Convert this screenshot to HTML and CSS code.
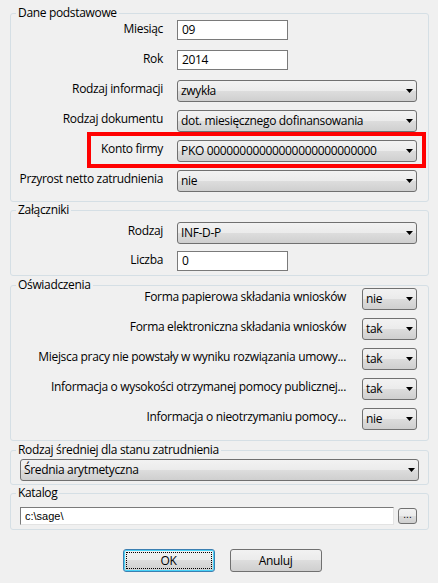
FILE: index.html
```html
<!DOCTYPE html>
<html lang="pl">
<head>
<meta charset="utf-8">
<title>Dialog</title>
<link rel="stylesheet" href="styles.css">
</head>
<body>
<div class="dialog">
  <fieldset class="group g1">
    <legend>Dane podstawowe</legend>
    <div class="row"><span class="lbl">Miesiąc</span><div class="edit">09</div></div>
    <div class="row"><span class="lbl">Rok</span><div class="edit">2014</div></div>
    <div class="row"><span class="lbl">Rodzaj informacji</span><div class="combo"><span>zwykła</span><svg class="arrow" viewBox="0 0 7 4"><polygon points="0,0 7,0 3.5,4"/></svg></div></div>
    <div class="row"><span class="lbl">Rodzaj dokumentu</span><div class="combo"><span>dot. miesięcznego dofinansowania</span><svg class="arrow" viewBox="0 0 7 4"><polygon points="0,0 7,0 3.5,4"/></svg></div></div>
    <div class="row"><span class="lbl">Konto firmy</span><div class="combo"><span>PKO 00000000000000000000000000</span><svg class="arrow" viewBox="0 0 7 4"><polygon points="0,0 7,0 3.5,4"/></svg></div><span class="redbox"></span></div>
    <div class="row"><span class="lbl">Przyrost netto zatrudnienia</span><div class="combo"><span>nie</span><svg class="arrow" viewBox="0 0 7 4"><polygon points="0,0 7,0 3.5,4"/></svg></div></div>
  </fieldset>

  <fieldset class="group g2">
    <legend>Załączniki</legend>
    <div class="row r29"><span class="lbl">Rodzaj</span><div class="combo"><span>INF-D-P</span><svg class="arrow" viewBox="0 0 7 4"><polygon points="0,0 7,0 3.5,4"/></svg></div></div>
    <div class="row r20"><span class="lbl">Liczba</span><div class="edit">0</div></div>
  </fieldset>

  <fieldset class="group g3">
    <legend>Oświadczenia</legend>
    <div class="srows">
      <div class="srow"><span class="lbl">Forma papierowa składania wniosków</span><div class="combo"><span>nie</span><svg class="arrow" viewBox="0 0 7 4"><polygon points="0,0 7,0 3.5,4"/></svg></div></div>
      <div class="srow"><span class="lbl">Forma elektroniczna składania wniosków</span><div class="combo"><span>tak</span><svg class="arrow" viewBox="0 0 7 4"><polygon points="0,0 7,0 3.5,4"/></svg></div></div>
      <div class="srow"><span class="lbl">Miejsca pracy nie powstały w wyniku rozwiązania umowy...</span><div class="combo"><span>tak</span><svg class="arrow" viewBox="0 0 7 4"><polygon points="0,0 7,0 3.5,4"/></svg></div></div>
      <div class="srow"><span class="lbl">Informacja o wysokości otrzymanej pomocy publicznej...</span><div class="combo"><span>tak</span><svg class="arrow" viewBox="0 0 7 4"><polygon points="0,0 7,0 3.5,4"/></svg></div></div>
      <div class="srow"><span class="lbl">Informacja o nieotrzymaniu pomocy...</span><div class="combo"><span>nie</span><svg class="arrow" viewBox="0 0 7 4"><polygon points="0,0 7,0 3.5,4"/></svg></div></div>
    </div>
  </fieldset>

  <fieldset class="group g4">
    <legend>Rodzaj średniej dla stanu zatrudnienia</legend>
    <div class="combo wide"><span>Średnia arytmetyczna</span><svg class="arrow" viewBox="0 0 7 4"><polygon points="0,0 7,0 3.5,4"/></svg></div>
  </fieldset>

  <fieldset class="group g5">
    <legend>Katalog</legend>
    <div class="pathrow">
      <div class="pathedit">c:\sage\</div>
      <div class="browse">...</div>
    </div>
  </fieldset>

  <div class="buttons">
    <div class="btn default"><span class="focus">OK</span></div>
    <div class="btn"><span class="focus nofocus">Anuluj</span></div>
  </div>
</div>
</body>
</html>
```

FILE: styles.css
```css
* { box-sizing: border-box; }

html, body {
  margin: 0;
  background: #f0f0f0;
}

body {
  width: 438px;
  height: 583px;
  overflow: hidden;
  font-family: "Open Sans", "Noto Sans", sans-serif;
  font-size: 12px;
  letter-spacing: -0.33px;
  color: #000;
}

.dialog {
  padding: 6px 9px 0 10px;
}

.group {
  margin: 0;
  padding: 0;
  min-inline-size: 0;
  border: 1px solid #d5dfe5;
  border-radius: 3px;
}

.group legend {
  margin-left: 5px;
  padding: 0 2px;
  line-height: 14px;
  height: 14px;
  white-space: nowrap;
}

.g1 { padding-bottom: 1px; }
.g2 { margin-top: 1px; padding-top: 5px; padding-bottom: 4px; }
.g3 { margin-top: 2px; padding-bottom: 2px; }
.g4 { margin-top: 2px; padding: 2px 9px 3px; }
.g5 { margin-top: 1px; padding: 7px 9px 4px; }
.g4 legend, .g5 legend { margin-left: -4px; }

.row {
  position: relative;
  display: grid;
  grid-template-columns: 152px 240px;
  column-gap: 14px;
  align-items: start;
  height: 30px;
}
.row.r29 { height: 29px; }
.row.r20 { height: 20px; }

.lbl {
  text-align: right;
  white-space: nowrap;
  line-height: 14px;
  padding-top: 2px;
}

.edit {
  width: 111px;
  height: 20px;
  border: 1px solid #7a7a7a;
  background: #fff;
  padding: 0 4px;
  line-height: 18px;
  white-space: nowrap;
}

.combo {
  height: 22px;
  border: 1px solid #707070;
  border-radius: 3px;
  background: linear-gradient(#f2f2f2, #ebebeb 50%, #dddddd 50%, #cfcfcf);
  padding: 0 3px;
  line-height: 20px;
  display: flex;
  justify-content: space-between;
  align-items: center;
  white-space: nowrap;
  overflow: hidden;
}

.arrow {
  width: 7px;
  height: 4px;
  flex: none;
  fill: #000;
}

.redbox {
  position: absolute;
  left: 76px;
  top: -8px;
  width: 339px;
  height: 36px;
  border: 4px solid #ff0000;
  pointer-events: none;
}

.srows {
  margin-top: -4px;
}

.srow {
  display: grid;
  grid-template-columns: 1fr 55px;
  column-gap: 16px;
  align-items: start;
  height: 30px;
  padding-right: 11px;
}

.pathrow {
  display: flex;
  align-items: flex-start;
  gap: 4px;
}

.pathedit {
  width: 374px;
  height: 18px;
  border: 1px solid #7a7a7a;
  border-right-color: #e3e3e3;
  border-bottom-color: #e3e3e3;
  background: #fff;
  font-family: "Liberation Sans", Arial, sans-serif;
  font-size: 11px;
  letter-spacing: 0;
  line-height: 16px;
  padding: 0 4px;
}

.browse {
  width: 19px;
  height: 16px;
  margin-top: 1px;
  border: 1px solid #707070;
  border-radius: 3px;
  background: linear-gradient(#f2f2f2, #ebebeb 50%, #dddddd 50%, #cfcfcf);
  font-family: "Liberation Sans", Arial, sans-serif;
  font-size: 10px;
  letter-spacing: 0;
  line-height: 12px;
  text-align: center;
}

.buttons {
  display: flex;
  justify-content: center;
  gap: 15px;
  margin-top: 19px;
  padding-left: 5px;
}

.btn {
  width: 92px;
  height: 23px;
  border: 1px solid #707070;
  border-radius: 3px;
  background: linear-gradient(#f2f2f2, #ebebeb 50%, #dddddd 50%, #cfcfcf);
  padding: 2px;
  display: flex;
}

.btn.default {
  border-color: #3c7fb1;
  box-shadow: inset 0 0 0 1px #48d2f7;
}

.focus {
  flex: 1;
  display: flex;
  align-items: center;
  justify-content: center;
  border: 1px dotted #000;
  line-height: 14px;
}

.focus.nofocus {
  border-color: transparent;
}
```
